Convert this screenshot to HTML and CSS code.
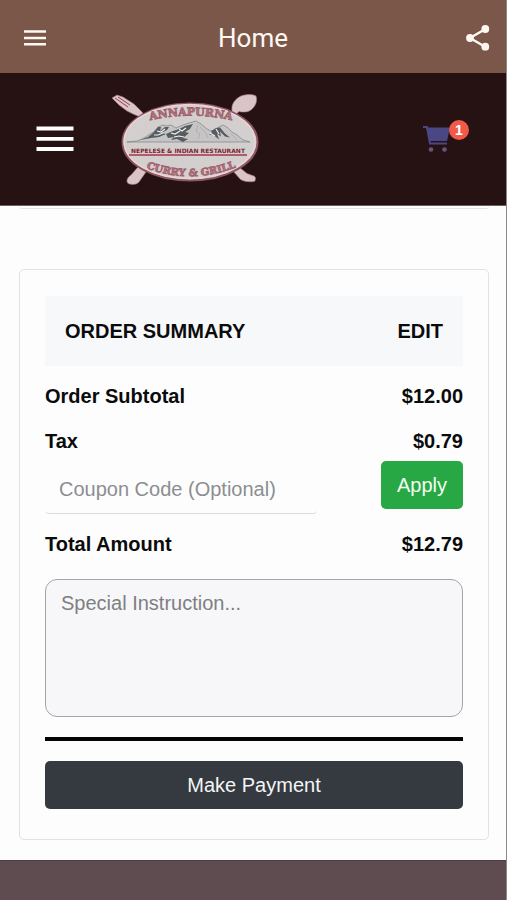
FILE: index.html
```html
<!DOCTYPE html>
<html lang="en">
<head>
<meta charset="utf-8">
<meta name="viewport" content="width=device-width, initial-scale=1">
<title>Home</title>
<link rel="stylesheet" href="styles.css">
</head>
<body>
<header class="appbar">
  <button class="icon-btn" type="button" aria-label="Open app menu">
    <svg width="22" height="16" viewBox="0 0 22 16"><path d="M0 1.500h22M0 8h22M0 14.200h22" stroke="#fff8f2" stroke-width="2.600"/></svg>
  </button>
  <h1 class="appbar-title">Home</h1>
  <button class="icon-btn share" type="button" aria-label="Share">
    <svg width="24" height="26" viewBox="0 0 24 26"><path d="M19.500 4L4 13l15.500 9" fill="none" stroke="#fff8f2" stroke-width="2.400"/><g fill="#fff8f2"><circle cx="19.300" cy="4" r="3.900"/><circle cx="4" cy="13" r="3.900"/><circle cx="19.300" cy="21.700" r="3.900"/></g></svg>
  </button>
</header>
<nav class="sitebar">
  <button class="icon-btn" type="button" aria-label="Open site menu">
    <svg width="38" height="26" viewBox="0 0 38 26"><path d="M0.500 2.500h37M0.500 12.800h37M0.500 23h37" stroke="#fff" stroke-width="3.800"/></svg>
  </button>
  <a class="logo" href="#">
    <svg width="170" height="110" viewBox="0 0 170 110" role="img" aria-label="Annapurna Curry &amp; Grill">
      <g fill="#d9c4c8" stroke="#a0727a" stroke-width=".6">
        <path d="M12 14l5-3 6 2 11 7 4 4 5 5-3 4-7-3-6-3-8-6z"/>
        <path d="M132 27c-1-7 3-12 9-15 5-2 12-2 15 0 2 5-1 11-5 14-4 2.800-9 2.200-12 1.500l-4 4-4-3z"/>
        <path d="M38 83l8 5-7 10c-3 3-7 3-11 1.500-2.500-3 0-6.500 3-8.500z"/>
        <path d="M133 87l6-4 8 6.500 7 2.500c2.500 1.500 1.500 4 .5 5.500-5 .5-10 .5-14-2z"/>
      </g>
      <path d="M15 14l13 9M18 13l12 8" stroke="#9a4050" stroke-width="1"/>
      <ellipse cx="90" cy="58" rx="67.500" ry="38.500" fill="#d5cccd" stroke="#8a5660" stroke-width="2"/>
      <ellipse cx="89.500" cy="57.500" rx="65.500" ry="37" fill="#d4cfcf" stroke="#ead4d7" stroke-width="1.400"/>
      <path d="M27 58l10-1 7-3 6-4 5-3 3-4 5-2 4 1 4-1 5 3 7-3 6-2 7-2 5 3 6 5 6 3 4-4 6-3 4 2 5 5 5 3 6 5 7 2z" fill="#c6c4c5" stroke="#7d8184" stroke-width=".7"/>
      <path d="M40 56l8-3 5-4 5-6 3 0-1 4 5-4 4 0-2 3-6 3 5 1-7 3-8 1zM66 50l7-3 6-2 6-3 8-2-3 5-5 3 4 1-6 5 5 1-5 3-6-3-6 1 3-3-6 1zM111 47l5-3 4-.5 5 6 5 4-5-1-5-5 1 5-4-3 2 6-5-4-5-1 3-2z" fill="#565c5f"/>
      <path d="M57 47l4 1 4-3M54 51l4 0 5-2M71 49l4 1 5-3M74 53l5-1 5 1M79 45l3 2 4-3M116 45l3 5M110 49l5 3" fill="none" stroke="#edf0ef" stroke-width="1.200"/>
      <path d="M98 41l-2 6 4 3-2 5M100 43l6 6 2 5M131 50l6 6" fill="none" stroke="#a6abad" stroke-width=".8"/>
      <path id="top-arc" d="M44 38Q90 25 138 38" fill="none"/>
      <path id="bottom-arc" d="M43 83Q91 102 139 82" fill="none"/>
      <text class="logo-name"><textPath href="#top-arc" startOffset="50%">ANNAPURNA</textPath></text>
      <text class="logo-name logo-name-low"><textPath href="#bottom-arc" startOffset="50%">CURRY &amp; GRILL</textPath></text>
      <text class="logo-line" x="88" y="69">NEPELESE &amp; INDIAN RESTAURANT</text>
      <path d="M29 71h118" stroke="#a83446" stroke-width="1.500"/>
    </svg>
  </a>
  <a class="cart" href="#" aria-label="Cart, 1 item">
    <svg width="28" height="28" viewBox="0 0 28 28"><path d="M1 2h4l3 16.500h17" fill="none" stroke="#4b4784" stroke-width="2"/><path d="M4 2.500h24l-3 13.500H7.500z" fill="#4b4784"/><g fill="#6b527f"><circle cx="9" cy="24.500" r="2.300"/><circle cx="22.500" cy="24.500" r="2.300"/></g></svg>
    <span class="badge">1</span>
  </a>
</nav>
<main class="content">
  <div class="card-end"></div>
  <form class="card">
    <div class="card-head">
      <h2 class="card-title">ORDER SUMMARY</h2>
      <a class="edit" href="#">EDIT</a>
    </div>
    <div class="row"><span>Order Subtotal</span><span>$12.00</span></div>
    <div class="row"><span>Tax</span><span>$0.79</span></div>
    <div class="coupon">
      <input class="coupon-input" type="text" placeholder="Coupon Code (Optional)" aria-label="Coupon Code (Optional)">
      <button class="btn apply" type="button">Apply</button>
    </div>
    <div class="row"><span>Total Amount</span><span>$12.79</span></div>
    <textarea class="note" placeholder="Special Instruction..." aria-label="Special Instruction"></textarea>
    <hr class="rule">
    <button class="btn pay" type="button">Make Payment</button>
  </form>
</main>
<footer class="footer"></footer>
</body>
</html>
```
FILE: styles.css
```css
* {
  box-sizing: border-box;
}

body {
  margin: 0;
  min-height: 100vh;
  display: flex;
  flex-direction: column;
  border-right: 1px solid #8e8a8c;
  background: #fdfdfe;
  color: #0b0b0c;
  font: 20px/30px "Liberation Sans", Arial, sans-serif;
}

h1, h2 {
  margin: 0;
}

a {
  color: inherit;
  text-decoration: none;
}

svg {
  display: block;
}

button, input, textarea {
  font: inherit;
}

.icon-btn {
  padding: 0;
  border: 0;
  background: none;
}

.appbar {
  display: grid;
  grid-template-columns: 1fr auto 1fr;
  align-items: center;
  height: 73px;
  padding: 3px 16px 0 16px;
  background: #7b574a;
}

.appbar .icon-btn {
  justify-self: start;
  margin-left: 8px;
}

.appbar .share {
  justify-self: end;
  margin-left: 0;
}

.appbar-title {
  color: #fff8f2;
  font: 400 26px/30px Roboto, sans-serif;
}

.sitebar {
  display: flex;
  align-items: center;
  height: 133px;
  padding: 0 36px;
  border-bottom: 1px solid #6d5f62;
  background: #261113;
}

.logo {
  margin-left: 26px;
}

.logo-name {
  fill: #b07680;
  stroke: #a0606b;
  stroke-width: 0.8px;
  font: bold 11px "DejaVu Serif", serif;
  text-anchor: middle;
}

.logo-name-low {
  font-size: 10px;
}

.logo-line {
  fill: #7c1f30;
  font: bold 6px "DejaVu Sans", sans-serif;
  text-anchor: middle;
}

.cart {
  position: relative;
  margin-left: auto;
  margin-right: 20px;
}

.badge {
  position: absolute;
  top: -5px;
  right: -19px;
  width: 20px;
  height: 20px;
  border-radius: 50%;
  background: #f15a48;
  color: #fff;
  font-size: 14px;
  font-weight: bold;
  line-height: 20px;
  text-align: center;
}

.content {
  flex: 1;
  padding: 0 17px 20px 19px;
}

.card-end {
  height: 3px;
  margin-bottom: 60px;
  border-bottom: 1px solid #e4e4e5;
  border-radius: 0 0 4px 4px;
}

.card {
  padding: 26px 25px 30px;
  border: 1px solid #e2e2e4;
  border-radius: 5px;
}

.card-head {
  display: flex;
  justify-content: space-between;
  margin-bottom: 15px;
  padding: 20px;
  background: #f6f8fa;
}

.card-title {
  font-size: 20px;
}

.edit {
  font-weight: bold;
}

.row {
  display: flex;
  justify-content: space-between;
  margin-top: 15px;
  font-weight: bold;
}

.coupon {
  display: flex;
  justify-content: space-between;
  margin-top: 5px;
}

.coupon-input {
  width: 65%;
  height: 48px;
  margin-top: 5px;
  padding: 0 14px;
  border: 0;
  border-bottom: 1px solid #dcdcde;
  border-radius: 4px;
  background: transparent;
}

.coupon-input::placeholder {
  color: #8c8e91;
}

.btn {
  height: 48px;
  padding: 0 16px;
  border: 0;
  border-radius: 5px;
}

.apply {
  background: #28a745;
  color: #f1fff0;
}

.note {
  display: block;
  width: 100%;
  height: 138px;
  margin: 20px 0;
  padding: 8px 15px;
  border: 1px solid #a3a4a7;
  border-radius: 12px;
  background: #f7f7f9;
  resize: none;
}

.note::placeholder {
  color: #7d8083;
}

.rule {
  height: 4px;
  margin: 0 0 20px;
  border: 0;
  background: #050505;
}

.pay {
  display: block;
  width: 100%;
  background: #343a40;
  color: #f4f5f6;
}

.footer {
  height: 40px;
  border-top: 1px solid #4c3f42;
  background: #5e4c50;
}
```
